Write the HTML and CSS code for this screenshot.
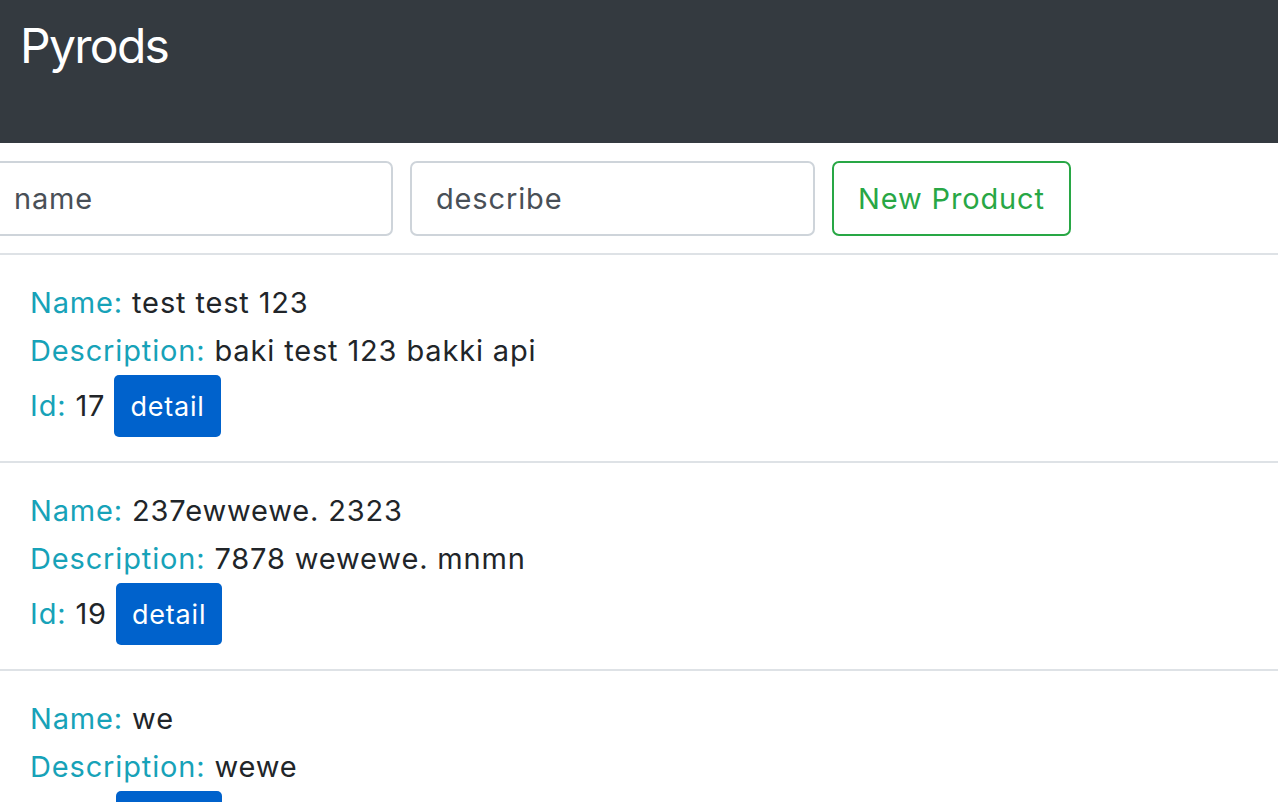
FILE: index.html
```html
<!DOCTYPE html>
<html lang="en">
<head>
<meta charset="utf-8">
<title>Pyrods</title>
<link rel="stylesheet" href="styles.css">
</head>
<body>
<header class="topbar">
  <h1 class="brand">Pyrods</h1>
</header>
<form class="new-form">
  <input class="field" type="text" value="name">
  <input class="field" type="text" value="describe">
  <button class="btn-outline" type="button">New Product</button>
</form>
<ul class="products">
  <li class="product">
    <div class="line"><span class="label">Name:</span> test test 123</div>
    <div class="line"><span class="label">Description:</span> baki test 123 bakki api</div>
    <div class="line id-line"><span><span class="label">Id:</span> 17</span><button class="btn-detail" type="button">detail</button></div>
  </li>
  <li class="product">
    <div class="line"><span class="label">Name:</span> 237ewwewe. 2323</div>
    <div class="line"><span class="label">Description:</span> 7878 wewewe. mnmn</div>
    <div class="line id-line"><span><span class="label">Id:</span> 19</span><button class="btn-detail" type="button">detail</button></div>
  </li>
  <li class="product">
    <div class="line"><span class="label">Name:</span> we</div>
    <div class="line"><span class="label">Description:</span> wewe</div>
    <div class="line id-line"><span><span class="label">Id:</span> 21</span><button class="btn-detail" type="button">detail</button></div>
  </li>
</ul>
</body>
</html>
```
FILE: styles.css
```css
* { box-sizing: border-box; }
html, body { margin: 0; padding: 0; }
body {
  font-family: Inter, Roboto, "Liberation Sans", sans-serif;
  color: #212529;
  background: #fff;
  overflow: hidden;
  letter-spacing: 0.85px;
}
.topbar {
  background: #343a40;
  height: 143px;
  padding: 16px 20px 0;
}
.brand {
  margin: 0;
  color: #fff;
  font-weight: 400;
  font-size: 48px;
  line-height: 60px;
  letter-spacing: -1.7px;
}
.new-form {
  display: flex;
  gap: 17px;
  margin-left: -12px;
  padding: 18px 0 17px;
  border-bottom: 2px solid #dee2e6;
}
.field {
  width: 405px;
  height: 75px;
  border: 2px solid #ced4da;
  border-radius: 7px;
  padding: 0 24px;
  font-family: inherit;
  font-size: 29px;
  letter-spacing: 0.85px;
  color: #495057;
  background: #fff;
  outline: none;
}
.btn-outline {
  height: 75px;
  padding: 0 24px;
  border: 2px solid #28a745;
  border-radius: 7px;
  background: #fff;
  color: #28a745;
  font-family: inherit;
  font-size: 29px;
  letter-spacing: 0.85px;
}
.products {
  list-style: none;
  margin: 0;
  padding: 0;
}
.product {
  padding: 24px 31px 24px 30px;
  border-bottom: 2px solid #dee2e6;
  font-size: 29px;
  line-height: 48px;
}
.label { color: #17a2b8; }
.id-line {
  display: flex;
  align-items: center;
  gap: 9px;
  height: 62px;
}
.btn-detail {
  height: 62px;
  padding: 0 16px;
  border: none;
  border-radius: 5px;
  background: #0062cc;
  color: #fff;
  font-family: inherit;
  font-size: 27px;
  letter-spacing: 0.8px;
}
```
